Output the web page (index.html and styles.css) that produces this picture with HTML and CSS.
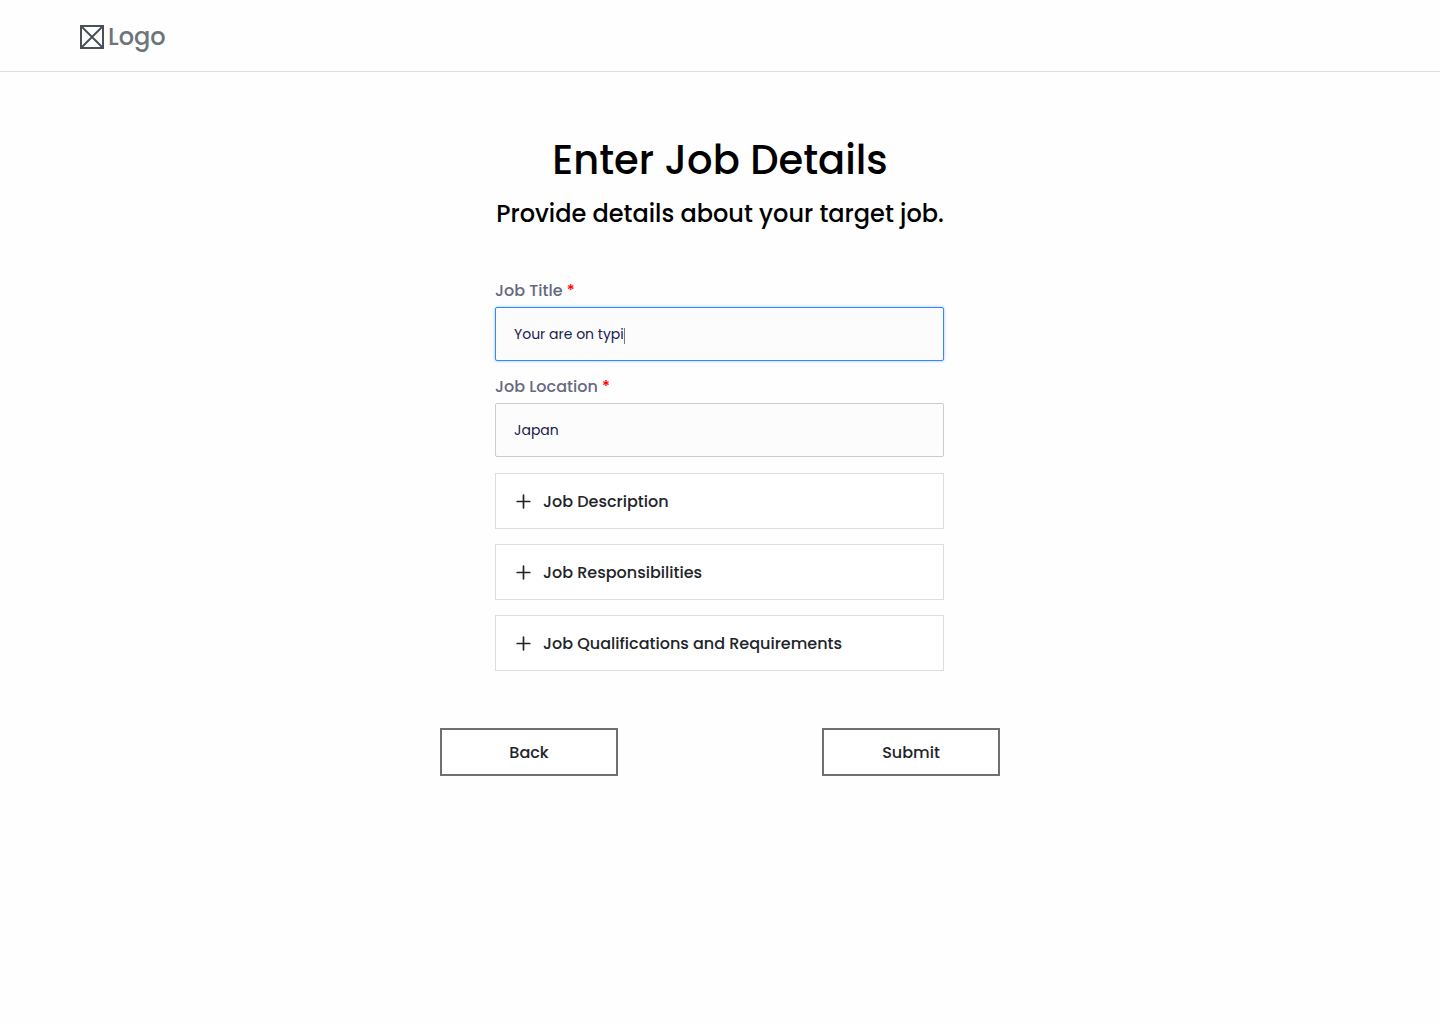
FILE: index.html
```html
<!DOCTYPE html>
<html lang="en">
<head>
  <meta charset="utf-8">
  <meta name="viewport" content="width=device-width, initial-scale=1">
  <title>Enter Job Details</title>
  <link rel="stylesheet" href="styles.css">
</head>
<body>
  <header class="site-header">
    <a class="logo" href="#">
      <svg class="logo-mark" viewBox="0 0 24 24" aria-hidden="true"><path d="M1 1h22v22H1zM2 2l20 20M22 2L2 22"/></svg>
      <span>Logo</span>
    </a>
  </header>
  <main class="page">
    <h1 class="title">Enter Job Details</h1>
    <p class="subtitle">Provide details about your target job.</p>
    <form class="form">
      <div class="fields">
        <div class="field">
          <label class="label" for="job-title">Job Title <span class="required">*</span></label>
          <div class="control">
            <input class="input input-active" id="job-title" type="text" value="Your are on typi" required>
            <span class="caret" aria-hidden="true"></span>
          </div>
        </div>
        <div class="field">
          <label class="label" for="job-location">Job Location <span class="required">*</span></label>
          <input class="input" id="job-location" type="text" value="Japan" required>
        </div>
      </div>
      <div class="panels">
        <button class="panel" type="button" aria-expanded="false">
          <svg class="plus" viewBox="0 0 15 15" aria-hidden="true"><path d="M7.5 1.2v12.6M1.2 7.5h12.6"/></svg>
          <span>Job Description</span>
        </button>
        <button class="panel" type="button" aria-expanded="false">
          <svg class="plus" viewBox="0 0 15 15" aria-hidden="true"><path d="M7.5 1.2v12.6M1.2 7.5h12.6"/></svg>
          <span>Job Responsibilities</span>
        </button>
        <button class="panel" type="button" aria-expanded="false">
          <svg class="plus" viewBox="0 0 15 15" aria-hidden="true"><path d="M7.5 1.2v12.6M1.2 7.5h12.6"/></svg>
          <span>Job Qualifications and Requirements</span>
        </button>
      </div>
      <div class="actions">
        <button class="button" type="button">Back</button>
        <button class="button" type="submit">Submit</button>
      </div>
    </form>
  </main>
</body>
</html>
```
FILE: styles.css
```css
* {
  box-sizing: border-box;
}

body {
  margin: 0;
  background: #fefefe;
  color: #000;
  font-family: Poppins, Inter, sans-serif;
  font-weight: 500;
}

button,
input {
  font: inherit;
}

.site-header {
  padding: 19px 80px 16px;
  border-bottom: 1px solid #dedede;
}

.logo {
  display: inline-flex;
  align-items: center;
  gap: 4px;
  color: #6c757d;
  font-size: 24px;
  line-height: 36px;
  text-decoration: none;
  vertical-align: top;
}

.logo-mark {
  width: 24px;
  height: 24px;
  fill: none;
  stroke: #495057;
  stroke-width: 2;
}

.page {
  padding: 58px 16px;
}

.title {
  margin: 0 0 6px;
  font-size: 40px;
  font-weight: 500;
  line-height: 60px;
  text-align: center;
}

.subtitle {
  margin: 0 0 47px;
  font-size: 24px;
  line-height: 36px;
  text-align: center;
}

.form {
  max-width: 560px;
  margin: 0 auto;
}

.fields,
.panels {
  display: flex;
  flex-direction: column;
  padding: 0 56px 0 55px;
}

.fields {
  gap: 14px;
  margin-bottom: 16px;
}

.field {
  display: flex;
  flex-direction: column;
  gap: 4px;
}

.label {
  color: #666980;
  font-size: 16px;
  line-height: 24px;
}

.required {
  color: #f00;
}

.control {
  position: relative;
}

.input {
  display: block;
  width: 100%;
  height: 54px;
  padding: 0 18px;
  border: 1px solid #cbccd2;
  border-radius: 2px;
  background: #fcfcfc;
  color: #18214d;
  font-size: 14px;
  font-weight: 400;
  outline: none;
}

.input-active {
  border-color: #3786fb;
  box-shadow: 0 0 3px rgba(55, 134, 251, 0.5);
}

.caret {
  position: absolute;
  top: 21px;
  left: 129px;
  width: 1px;
  height: 16px;
  background: #777;
}

.panels {
  gap: 15px;
  margin-bottom: 57px;
}

.panel {
  display: flex;
  align-items: center;
  gap: 12px;
  height: 56px;
  padding: 0 20px;
  border: 1px solid #dadee2;
  background: #fff;
  color: #212529;
  font-size: 16px;
}

.plus {
  width: 15px;
  height: 15px;
  fill: none;
  stroke: #212529;
  stroke-width: 1.7;
  stroke-linecap: round;
}

.actions {
  display: flex;
  justify-content: space-between;
}

.button {
  width: 178px;
  height: 48px;
  border: 2px solid #707070;
  background: #fff;
  color: #212529;
  font-size: 16px;
}
```
